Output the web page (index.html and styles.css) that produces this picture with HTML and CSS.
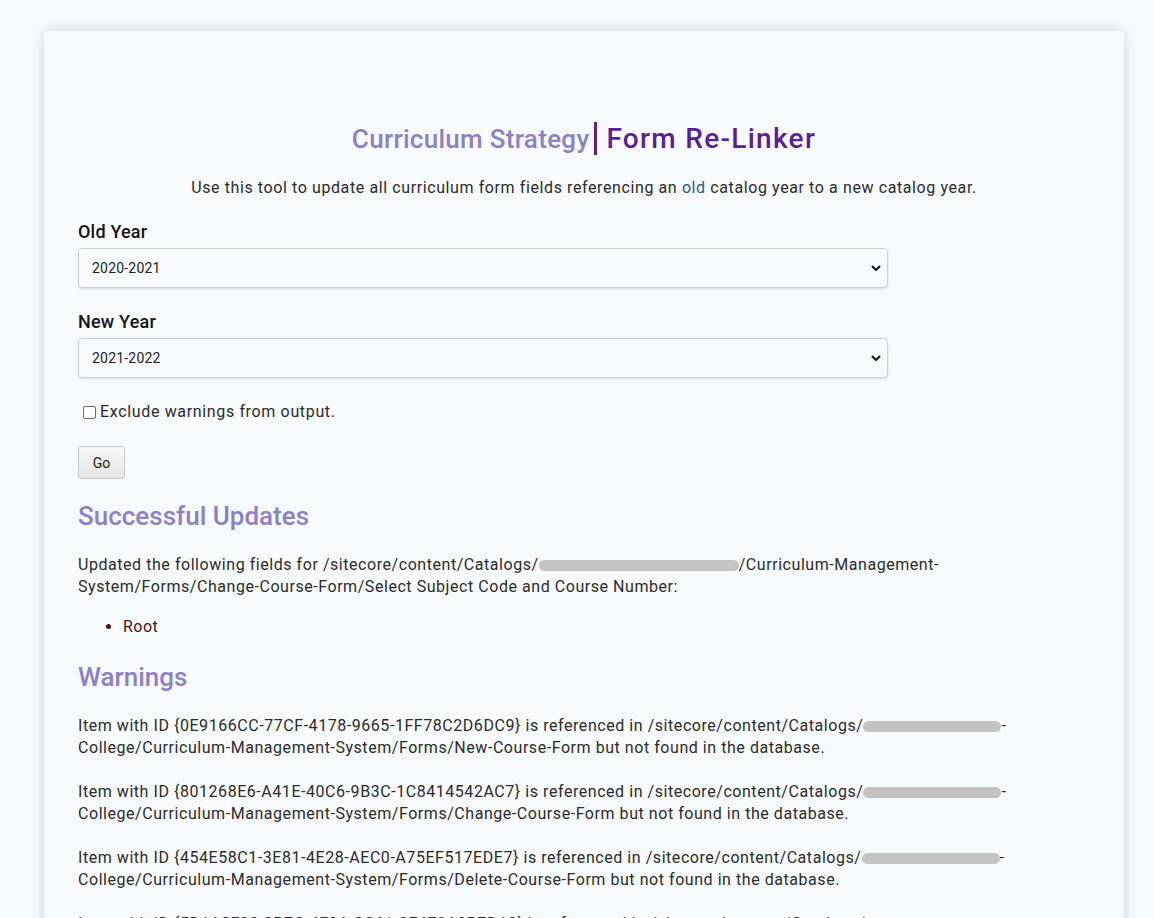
FILE: index.html
```html
<!DOCTYPE html>
<html>
<head>
<meta charset="utf-8">
<link rel="stylesheet" href="styles.css">
</head>
<body>
<div class="card">
  <h1 class="title"><span class="title-light">Curriculum Strategy</span><span class="title-dark">Form Re-Linker</span></h1>
  <p class="intro">Use this tool to update all curriculum form fields referencing an <span class="accent">old</span> catalog year to a new catalog year.</p>

  <label class="field-label">Old Year</label>
  <div class="select"><span>2020-2021</span><svg class="chev" viewBox="0 0 10 6" width="10" height="6"><path d="M1 1l4 4 4-4" fill="none" stroke="#111" stroke-width="2"/></svg></div>

  <label class="field-label second">New Year</label>
  <div class="select"><span>2021-2022</span><svg class="chev" viewBox="0 0 10 6" width="10" height="6"><path d="M1 1l4 4 4-4" fill="none" stroke="#111" stroke-width="2"/></svg></div>

  <div class="check-row"><span class="checkbox"></span><span>Exclude warnings from output.</span></div>

  <button class="go">Go</button>

  <h2 class="section first">Successful Updates</h2>
  <p class="text">Updated the following fields for /sitecore/content/Catalogs/<span class="redact r1"></span>/Curriculum-Management-<br>System/Forms/Change-Course-Form/Select Subject Code and Course Number:</p>
  <ul class="list"><li>Root</li></ul>

  <h2 class="section">Warnings</h2>
  <p class="text w">Item with ID {0E9166CC-77CF-4178-9665-1FF78C2D6DC9} is referenced in /sitecore/content/Catalogs/<span class="redact r2"></span>-<br>College/Curriculum-Management-System/Forms/New-Course-Form but not found in the database.</p>
  <p class="text w">Item with ID {801268E6-A41E-40C6-9B3C-1C8414542AC7} is referenced in /sitecore/content/Catalogs/<span class="redact r2"></span>-<br>College/Curriculum-Management-System/Forms/Change-Course-Form but not found in the database.</p>
  <p class="text w">Item with ID {454E58C1-3E81-4E28-AEC0-A75EF517EDE7} is referenced in /sitecore/content/Catalogs/<span class="redact r2"></span>-<br>College/Curriculum-Management-System/Forms/Delete-Course-Form but not found in the database.</p>
  <p class="text w">Item with ID {5D1A3F02-2B7C-4E9A-8C61-0F4E2A9B7D13} is referenced in /sitecore/content/Catalogs/<span class="redact r2"></span>-<br>College/Curriculum-Management-System/Forms/Course-Form but not found in the database.</p>
</div>
</body>
</html>
```

FILE: styles.css
```css
html, body {
  margin: 0;
  padding: 0;
  background: #f8fbfd;
}
body {
  font-family: Roboto, "Liberation Sans", sans-serif;
  color: #222;
  overflow: hidden;
  height: 918px;
}
.card {
  margin: 31px 0 0 44px;
  width: 1080px;
  min-height: 1000px;
  box-sizing: border-box;
  padding: 91px 34px 40px;
  background: #f8fbfd;
  box-shadow: 0 0 14px rgba(0, 0, 0, 0.16);
}
.title {
  margin: 0;
  text-align: center;
  font-weight: 500;
  line-height: 34px;
  font-size: 28px;
}
.title-light {
  color: #8c80c6;
  font-size: 26px;
  letter-spacing: 0.3px;
}
.title-dark {
  color: #5b1f95;
  letter-spacing: 1.3px;
  border-left: 3px solid #5b1f95;
  padding-left: 9px;
  margin-left: 5px;
}
.intro {
  margin: 21px 0 0;
  text-align: center;
  font-size: 16px;
  line-height: 22px;
  letter-spacing: 0.6px;
  color: #2b2b2b;
}
.accent { color: #2f5593; }
.field-label {
  display: block;
  margin-top: 21px;
  font-size: 18px;
  line-height: 24px;
  font-weight: 500;
  letter-spacing: 0.2px;
  color: #141414;
}
.field-label.second { margin-top: 22px; }
.select {
  margin-top: 4px;
  width: 810px;
  height: 40px;
  box-sizing: border-box;
  border: 1px solid #cfcfcf;
  border-radius: 4px;
  background: #f8fbfd;
  box-shadow: 0 1px 3px rgba(0, 0, 0, 0.12);
  display: flex;
  align-items: center;
  justify-content: space-between;
  padding: 0 6px 0 13px;
  font-size: 14px;
  letter-spacing: 0.2px;
  color: #222;
}
.check-row {
  margin-top: 23px;
  display: flex;
  align-items: center;
  gap: 4px;
  font-size: 16px;
  line-height: 22px;
  letter-spacing: 0.65px;
  color: #2b2b2b;
  padding-left: 5px;
}
.checkbox {
  width: 11px;
  height: 11px;
  border: 1px solid #6b6b6b;
  border-radius: 2px;
  background: #fff;
}
.go {
  display: block;
  margin-top: 23px;
  height: 33px;
  width: 47px;
  border: 1px solid #cacaca;
  border-radius: 3px;
  background: linear-gradient(#f7f7f7, #e4e4e4);
  font-family: Roboto, "Liberation Sans", sans-serif;
  font-size: 14px;
  color: #222;
  padding: 0;
}
.section {
  margin: 23px 0 0;
  font-size: 26px;
  line-height: 32px;
  font-weight: 500;
  color: #8c80c6;
}
.section.first { margin-top: 21px; }
.text {
  margin: 22px 0 0;
  font-size: 16px;
  line-height: 22px;
  letter-spacing: 0.55px;
  color: #2b2b2b;
}
.text.w + .text.w { margin-top: 22px; }
.redact {
  display: inline-block;
  height: 11px;
  border-radius: 6px;
  background: #c3c3c3;
  vertical-align: -1px;
  filter: blur(0.6px);
}
.r1 { width: 200px; }
.r2 { width: 138px; }
.list {
  margin: 18px 0 0;
  padding-left: 45px;
  font-size: 16px;
  line-height: 22px;
  letter-spacing: 0.5px;
  color: #4a1212;
}
```
